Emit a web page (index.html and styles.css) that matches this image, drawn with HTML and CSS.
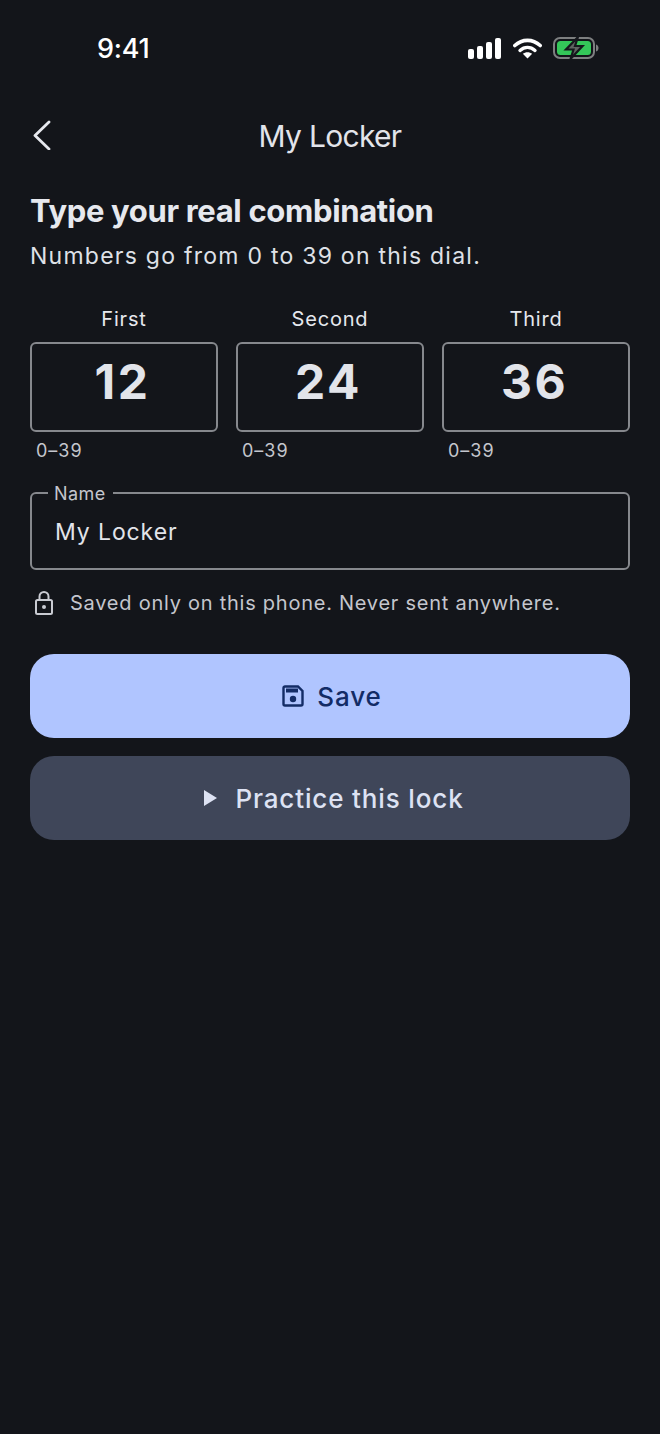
FILE: index.html
```html
<!DOCTYPE html>
<html>
	<head>
		<link rel="stylesheet" href="styles.css">
	</head>
	<body>
		<div class="status">
			<span class="time">9:41</span>
			<div class="status-icons">
				<svg width="34" height="21" viewBox="0 0 34 21"><rect x="0" y="11" width="6" height="10" rx="2" fill="#fff"/><rect x="9" y="8" width="6" height="13" rx="2" fill="#fff"/><rect x="18" y="4" width="6" height="17" rx="2" fill="#fff"/><rect x="27" y="0" width="6" height="21" rx="2" fill="#fff"/></svg>
				<svg width="29" height="21" viewBox="0 0 29 21"><path d="M1.8 7.500C9.200 .6 19.800 .6 27.200 7.500" fill="none" stroke="#fff" stroke-width="3.600" stroke-linecap="round"/><path d="M7 12.400C11.500 8.400 17.500 8.400 22 12.400" fill="none" stroke="#fff" stroke-width="3.400" stroke-linecap="round"/><path d="M14.500 20.500L9.800 15.800C12.500 13.600 16.500 13.600 19.200 15.800Z" fill="#fff"/></svg>
				<svg width="46" height="26" viewBox="0 0 46 26"><rect x="1" y="3" width="40" height="20" rx="6" fill="none" stroke="#7d7f80" stroke-width="2"/><rect x="4" y="6" width="34" height="14" rx="3.500" fill="#34c759"/><path d="M43 9.500c1.800.5 2.500 2 2.500 3.500s-.7 3-2.500 3.500z" fill="#7d7f80"/><path d="M25 2L13 14.500H20.500L17.500 24L29.500 11H22Z" fill="#5f6361" stroke="#15171c" stroke-width="2.200"/></svg>
			</div>
		</div>

		<div class="topbar">
			<svg class="back" width="20" height="30" viewBox="0 0 20 30"><path d="M17 2L3 15.500L17 29" fill="none" stroke="#e6e8ee" stroke-width="2.800" stroke-linecap="round" stroke-linejoin="round"/></svg>
			<div class="title">My Locker</div>
		</div>

		<div class="content">
			<h1>Type your real combination</h1>
			<p class="sub">Numbers go from 0 to 39 on this dial.</p>

			<div class="fields">
				<div class="field">
					<div class="field-label">First</div>
					<div class="digit-box">12</div>
					<div class="hint">0–39</div>
				</div>
				<div class="field">
					<div class="field-label">Second</div>
					<div class="digit-box">24</div>
					<div class="hint">0–39</div>
				</div>
				<div class="field">
					<div class="field-label">Third</div>
					<div class="digit-box">36</div>
					<div class="hint">0–39</div>
				</div>
			</div>

			<div class="name-box">
				<span class="name-label">Name</span>
				<span class="name-value">My Locker</span>
			</div>

			<div class="note">
				<svg width="20" height="26" viewBox="0 0 20 26"><rect x="2" y="10" width="16" height="14" rx="1.500" fill="none" stroke="#c9cbd2" stroke-width="2"/><path d="M5.500 10V6.500a4.500 4.500 0 0 1 9 0V10" fill="none" stroke="#c9cbd2" stroke-width="2"/><circle cx="10" cy="17" r="2" fill="#c9cbd2"/></svg>
				<span>Saved only on this phone. Never sent anywhere.</span>
			</div>

			<div class="btn btn-save">
				<svg width="22" height="22" viewBox="0 0 22 22"><path d="M3 1.500H16L20.500 6V19a1.500 1.500 0 0 1-1.500 1.500H3A1.500 1.500 0 0 1 1.500 19V3A1.500 1.500 0 0 1 3 1.500Z" fill="none" stroke="#132c66" stroke-width="2.400"/><rect x="4" y="3.500" width="12" height="4" fill="#132c66"/><circle cx="11" cy="14" r="3.200" fill="#132c66"/></svg>
				<span>Save</span>
			</div>
			<div class="btn btn-practice">
				<svg width="13" height="16" viewBox="0 0 13 16"><path d="M0 0L13 8L0 16Z" fill="#dde2f3"/></svg>
				<span>Practice this lock</span>
			</div>
		</div>
	</body>
</html>
```

FILE: styles.css
```css
body {
	margin: 0;
	height: 1434px;
	background-color: #13151a;
	font-family: Inter, "Liberation Sans", sans-serif;
	color: #e6e8ee;
	overflow: hidden;
}
.status {
	height: 98px;
	box-sizing: border-box;
	padding: 31px 61px 0 97px;
	display: flex;
	justify-content: space-between;
	align-items: flex-start;
}
.time {
	font-size: 27px;
	line-height: 36px;
	font-weight: 500;
	letter-spacing: -0.2px;
	color: #fff;
}
.status-icons {
	display: flex;
	align-items: center;
	gap: 11px;
	height: 34px;
}
.topbar {
	position: relative;
	height: 76px;
	display: flex;
	align-items: center;
	justify-content: center;
}
.back {
	position: absolute;
	left: 32px;
	top: 22px;
}
.title {
	font-size: 30px;
	font-weight: 400;
	letter-spacing: -0.7px;
	color: #e2e4ea;
}
.content {
	padding: 0 30px;
}
h1 {
	margin: 17px 0 0;
	font-size: 31px;
	line-height: 40px;
	font-weight: 700;
	letter-spacing: -0.34px;
	color: #e6e8ee;
}
.sub {
	margin: 9px 0 0;
	font-size: 23px;
	line-height: 32px;
	letter-spacing: 1.25px;
	color: #dfe1e7;
}
.fields {
	display: flex;
	gap: 18px;
	margin-top: 33px;
}
.field {
	flex: 1;
}
.field-label {
	text-align: center;
	font-size: 20px;
	line-height: 28px;
	letter-spacing: 0.8px;
	color: #e6e8ee;
}
.digit-box {
	margin-top: 9px;
	height: 90px;
	box-sizing: border-box;
	border: 2px solid #86888d;
	border-radius: 6px;
	padding-right: 3px;
	text-align: center;
	font-size: 48px;
	line-height: 76px;
	font-weight: 700;
	letter-spacing: 2.5px;
	color: #e2e4ea;
}
.hint {
	margin-top: 7px;
	padding-left: 6px;
	font-size: 18px;
	line-height: 24px;
	letter-spacing: 1px;
	color: #c4c6cd;
}
.name-box {
	position: relative;
	margin-top: 29px;
	height: 78px;
	box-sizing: border-box;
	border: 2px solid #86888d;
	border-radius: 6px;
	padding: 2px 23px 0;
	display: flex;
	align-items: center;
}
.name-label {
	position: absolute;
	left: 16px;
	top: -11px;
	padding: 0 7px 0 6px;
	background-color: #13151a;
	font-size: 18px;
	line-height: 22px;
	letter-spacing: 0.4px;
	color: #c4c6cd;
}
.name-value {
	font-size: 23px;
	letter-spacing: 0.9px;
	color: #e2e4ea;
}
.note {
	display: flex;
	align-items: center;
	gap: 16px;
	margin-top: 19px;
	padding-left: 4px;
	font-size: 20px;
	line-height: 28px;
	letter-spacing: 0.75px;
	color: #c4c6cd;
}
.btn {
	display: flex;
	align-items: center;
	justify-content: center;
	height: 84px;
	border-radius: 24px;
	font-size: 26px;
	font-weight: 500;
	letter-spacing: 0.85px;
}
.btn-save {
	margin-top: 37px;
	padding-left: 4px;
	gap: 13px;
	background-color: #b0c5ff;
	color: #132c66;
}
.btn-practice {
	margin-top: 18px;
	padding-left: 8px;
	gap: 18px;
	background-color: #3f4659;
	color: #dde2f3;
}
```
